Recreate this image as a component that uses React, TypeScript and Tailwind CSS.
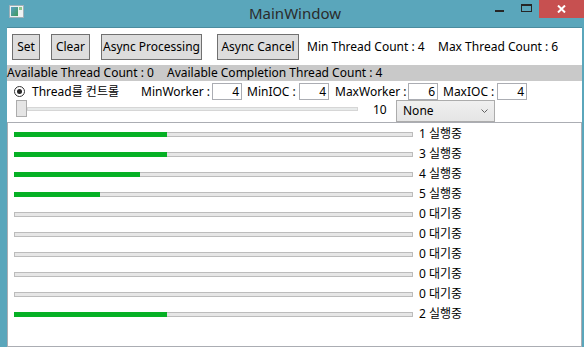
import React from "react";

const ROWS: { fill: number; label: string }[] = [
  { fill: 153, label: "1 실행중" },
  { fill: 153, label: "3 실행중" },
  { fill: 126, label: "4 실행중" },
  { fill: 86, label: "5 실행중" },
  { fill: 0, label: "0 대기중" },
  { fill: 0, label: "0 대기중" },
  { fill: 0, label: "0 대기중" },
  { fill: 0, label: "0 대기중" },
  { fill: 0, label: "0 대기중" },
  { fill: 153, label: "2 실행중" },
];

function WinButton({ label, className }: { label: string; className: string }) {
  return (
    <div
      className={`h-[26px] flex items-center justify-center bg-[#dddddd] border border-[#707070] ${className}`}
    >
      {label}
    </div>
  );
}

function NumBox({ value }: { value: string }) {
  return (
    <div className="w-[30px] h-[17px] border border-[#abadb3] bg-white flex items-center justify-end pr-[2px] leading-none">
      {value}
    </div>
  );
}

function Progress({ fill }: { fill: number }) {
  return (
    <div className="w-[399px] h-[5px] bg-[#bcbcbc] flex">
      {fill > 0 && <div className="h-full bg-[#06b025]" style={{ width: fill }} />}
      <div className={`flex-1 my-[1px] mr-[1px] bg-[#e6e6e6] ${fill > 0 ? "" : "ml-[1px]"}`} />
    </div>
  );
}

export default function App() {
  return (
    <div className="w-[584px] h-[347px] overflow-hidden bg-[#5aa6bb] flex flex-col font-['Segoe_UI','Noto_Sans','Noto_Sans_CJK_KR',sans-serif] text-[12px] text-black">
      {/* title bar */}
      <div className="h-[27px] flex items-start">
        <div className="w-[95px] pl-[9px] pt-[5px]">
          <svg width="15" height="13" viewBox="0 0 15 13">
            <defs>
              <linearGradient id="ic" x1="0" y1="0" x2="1" y2="1">
                <stop offset="0" stopColor="#5aa0c8" />
                <stop offset="1" stopColor="#3f9a5a" />
              </linearGradient>
            </defs>
            <rect x="0.5" y="0.5" width="14" height="12" fill="#eef2f3" stroke="#9fb0b8" />
            <rect x="2" y="2" width="7" height="9" fill="url(#ic)" />
            <rect x="10" y="2" width="3" height="3" fill="#8cc98c" />
          </svg>
        </div>
        <div className="w-[400px] h-full flex items-center justify-center text-[15px] text-[#2b2b2b] pb-[1px]">
          MainWindow
        </div>
        <div className="w-[89px] flex items-start">
          <div className="mt-[10px] w-[9px] h-[2px] bg-[#262626]" />
          <div className="ml-[17px] mt-[4px] w-[11px] h-[8px] border border-t-2 border-[#262626]" />
          <div className="ml-[7px] w-[45px] h-[18px] bg-[#c75050] flex items-center justify-center">
            <svg width="9" height="8" viewBox="0 0 9 8">
              <path d="M1 0.5 L8 7.5 M8 0.5 L1 7.5" stroke="#ffffff" strokeWidth="2" />
            </svg>
          </div>
        </div>
      </div>

      {/* client area */}
      <div className="flex-1 ml-[7px] w-[575px] bg-white border-t border-[#4b8c9f] flex flex-col">
        <div className="mt-[6px] pl-[5px] flex items-center">
          <WinButton label="Set" className="w-[28px]" />
          <WinButton label="Clear" className="ml-[11px] w-[39px]" />
          <WinButton label="Async Processing" className="ml-[11px] w-[101px]" />
          <WinButton label="Async Cancel" className="ml-[15px] w-[82px]" />
          <span className="ml-[8px] w-[131px] whitespace-nowrap">Min Thread Count : 4</span>
          <span className="whitespace-nowrap">Max Thread Count : 6</span>
        </div>

        <div className="mt-[5px] h-[16px] bg-[#c9c9c9] flex items-center whitespace-nowrap">
          <span className="w-[160px]">Available Thread Count : 0</span>
          <span>Available Completion Thread Count : 4</span>
        </div>

        <div className="mt-[2px] h-[17px] flex items-center whitespace-nowrap">
          <div className="ml-[7px] w-[11px] h-[11px] rounded-full border border-[#333333] bg-white flex items-center justify-center">
            <div className="w-[5px] h-[5px] rounded-full bg-[#262626]" />
          </div>
          <span className="ml-[7px] w-[109px]">Thread를 컨트롤</span>
          <span className="w-[71px]">MinWorker :</span>
          <NumBox value="4" />
          <span className="ml-[5px] w-[52px]">MinIOC :</span>
          <NumBox value="4" />
          <span className="ml-[6px] w-[73px]">MaxWorker :</span>
          <NumBox value="6" />
          <span className="ml-[5px] w-[54px]">MaxIOC :</span>
          <NumBox value="4" />
        </div>

        <div className="h-[22px] flex items-start">
          <div className="ml-[9px] w-[11px] h-[17px] bg-[#e5e5e5] border border-[#acacac]" />
          <div className="mt-[7px] w-[331px] h-[4px] bg-[#e7eaea] border border-[#d6d6d6]" />
          <span className="ml-[15px] w-[23px] mt-[1px]">10</span>
          <div className="w-[99px] h-[22px] bg-gradient-to-b from-[#f0f0f0] to-[#e5e5e5] border border-[#acacac] flex items-center justify-between pl-[6px] pr-[6px]">
            <span>None</span>
            <svg width="7" height="4" viewBox="0 0 7 4">
              <path d="M0.5 0.5 L3.5 3.5 L6.5 0.5" fill="none" stroke="#606060" strokeWidth="1" />
            </svg>
          </div>
        </div>

        <div className="flex-1 border border-[#abadb3] pt-[1px] flex flex-col">
          {ROWS.map((r, i) => (
            <div key={i} className="h-[20px] flex items-center pl-[6px]">
              <Progress fill={r.fill} />
              <span className="ml-[6px] whitespace-nowrap">{r.label}</span>
            </div>
          ))}
        </div>
      </div>
    </div>
  );
}
